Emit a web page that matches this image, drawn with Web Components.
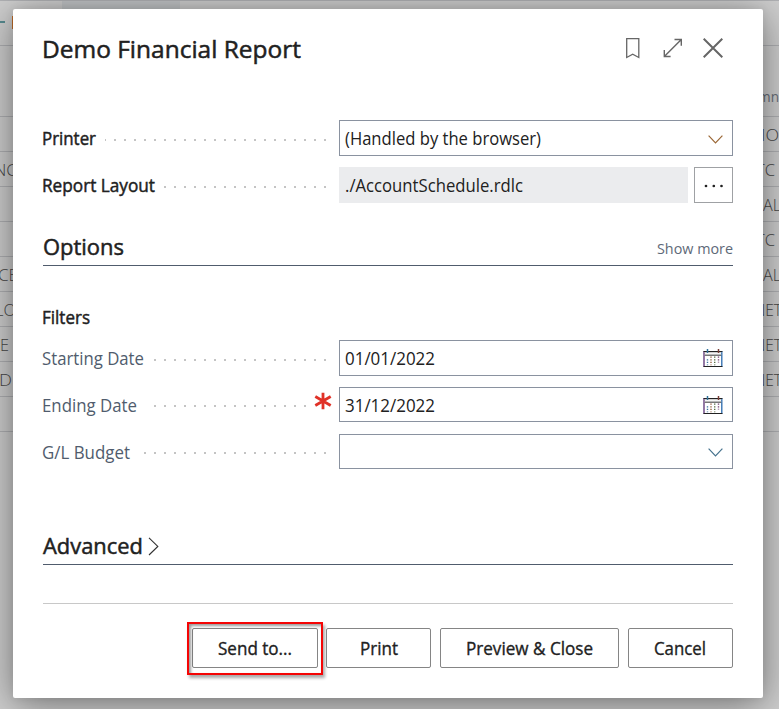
<!DOCTYPE html>
<html lang="en">
<head>
<meta charset="utf-8">
<title>Demo Financial Report</title>
<style>
html,body{margin:0;height:100%;overflow:hidden}
body{font-family:"Open Sans","Noto Sans",sans-serif;font-size:17.3px;color:#212121;background:#cfcfcf}
</style>
</head>
<body>
<report-page></report-page>
<script>
const define=(name,html,setup)=>{
  const t=document.createElement('template');t.innerHTML=html;
  customElements.define(name,class extends HTMLElement{
    constructor(){super();this.attachShadow({mode:'open'}).append(t.content.cloneNode(true));}
    connectedCallback(){if(setup)setup(this,this.shadowRoot);}
  });
};

/* Single-line text condensed or widened to a given measure. */
customElements.define('fit-text',class extends HTMLElement{
  constructor(){
    super();
    this.attachShadow({mode:'open'}).innerHTML='<style>:host{display:inline-block;white-space:nowrap;flex:none}span{display:inline-block;transform-origin:0 50%;-webkit-text-stroke:var(--stroke,0) currentColor}</style><span></span>';
  }
  connectedCallback(){
    const s=this.shadowRoot.querySelector('span');
    const text=this.getAttribute('text'),w=+this.getAttribute('w');
    s.style.transform='none';
    s.textContent=text;
    const natural=s.getBoundingClientRect().width;
    if(w&&natural){
      s.style.transform=`scaleX(${(w/natural).toFixed(4)})`;
      this.style.width=w+'px';
    }
  }
});

define('ui-icon',`<style>:host{display:block;flex:none}svg{display:block;fill:none;stroke:currentColor}</style>`,(el,r)=>{
  const icons={
    bookmark:'<svg width="14" height="21"><path d="M.7.5h12.1v19l-6.1-3.3-6 3.3z" stroke-width="1.3"/></svg>',
    expand:'<svg width="20" height="20"><path d="M1.3 18.5 18.3 1.5M11.5 1.5h6.8v6.3M1.3 12v6.5h6.3" stroke-width="1.4"/></svg>',
    close:'<svg width="20" height="20"><path d="m.7.7 18.6 18.6M19.3.7.7 19.3" stroke-width="2"/></svg>',
    down:'<svg width="15" height="9"><path d="m.6.7 6.9 7.2L14.4.7" stroke-width="1.2"/></svg>',
    right:'<svg width="11" height="19"><path d="m1 .8 8.8 8.6L1 18" stroke-width="1.15"/></svg>',
    dots:'<svg width="20" height="4"><g fill="#212121" stroke="none"><circle cx="2" cy="2" r="1.35"/><circle cx="9.8" cy="2" r="1.35"/><circle cx="17.5" cy="2" r="1.35"/></g></svg>',
    star:'<svg width="18" height="18"><path d="M9 .7v16.6M1.3 4.5l15.4 9M16.7 4.5l-15.4 9" stroke-width="2.8"/></svg>',
    calendar:'<svg width="20" height="19"><path d="M1 2v16" stroke="#5a3075" stroke-width="1.3"/><path d="M18.8 2v16" stroke="#2869ad" stroke-width="1.3"/><path d="M.6 17.5h18.8M.6 2.5h18.8" stroke="#222" stroke-width="1.1"/><path d="M1.8 3.6h16.4M1.8 5.4h16.4" stroke="#ccc"/><path d="M1.8 6.3h16.4" stroke="#555"/><path d="M4.5 0v4" stroke="#31719b" stroke-width="1.5"/><path d="M15.5 0v4" stroke="#783c35" stroke-width="1.5"/><g stroke-dasharray="1.2 1.4" stroke-width="1.4"><path d="M4.5 10.2v6" stroke="#39719c"/><path d="M8 7.6v8.6" stroke="#986241"/><path d="M11.7 7.6v8.6" stroke="#597047"/><path d="M15.5 7.6v6" stroke="#733e6e"/></g></svg>'
  };
  r.innerHTML+=icons[el.getAttribute('name')];
});

define('backdrop-table',`<style>
:host{display:grid;grid-template-rows:45px 71px repeat(9,35px) 1fr;height:709px;color:#484848;font-size:17px;font-weight:300;box-sizing:border-box}
.r{display:flex;justify-content:space-between;align-items:center;border-top:1px solid #b0b1b4;box-sizing:border-box;overflow:hidden}
.r:first-child{border:0;position:relative;align-items:flex-start}
.tab{margin-left:62px;width:118px;height:45px;background:#c2c5c7}
.dash{position:absolute;left:0;top:21px;width:5px;height:2px;background:#588c91}
.bar{position:absolute;left:12px;top:16px;width:3px;height:13px;background:#c06b28}
.head .b{font-size:14px;font-weight:400;color:#69707a;margin-top:31px}
</style>`,(el,r)=>{
  let h='<div class="r"><div class="tab"></div><i class="dash"></i><i class="bar"></i></div><div class="r head"><span></span><fit-text class="b" text="mn" w="21"></fit-text></div>';
  /* left text, its offset and width; right text, its width and right inset */
  const rows=[['',0,0,'MO',29,0],['NC',-6,23,'TC',19,4],['',0,0,'AL',18,-2],['',0,0,'TC',19,4],['CE',-2,20,'AL',18,-2],['LO',-5,21,'NET',28,-3],['E',0,9,'NET',28,-3],['D',-1,13,'NET',28,-3]];
  rows.forEach(([a,x,w,b,v,m])=>h+=`<div class="r">${a?`<fit-text text="${a}" w="${w}" style="margin-left:${x}px"></fit-text>`:'<span></span>'}<fit-text text="${b}" w="${v}" style="margin-right:${m}px"></fit-text></div>`);
  r.innerHTML+=h+'<div class="r"></div><div class="r"></div>';
});

define('field-row',`<style>
:host{display:grid;grid-template-columns:284px 12px 1fr;grid-template-rows:100%;height:36px;align-items:center;color:#505c6d}
:host([strong]){color:#212121}
.l{display:flex;align-items:center;min-width:0;height:100%;font-weight:400}
.l fit-text{margin:1px 1px 0 -1px}
:host([strong]) .l{--stroke:.45px}
.d{flex:1;margin-left:8px;height:2px;margin-top:3px;background:radial-gradient(circle at 8px 1px,#c4c4c4 .8px,#d2d2d2 1.1px,transparent 1.4px) right top/10px 2px repeat-x}
.s{display:none;margin:-8px -5px 0 -12px;color:#e03127;width:18px;z-index:1}
:host([required]) .s{display:block}
:host([required]) .d{margin-right:19px}
.c{display:flex;gap:6px;height:100%}
</style><div class="l"><fit-text></fit-text><span class="d"></span><ui-icon class="s" name="star"></ui-icon></div><span></span><div class="c"><slot></slot></div>`,(el,r)=>{
  const t=r.querySelector('fit-text');
  t.setAttribute('text',el.getAttribute('label'));t.setAttribute('w',el.getAttribute('w'));t.connectedCallback();
  if(el.hasAttribute('gap'))r.querySelector('.d').style.marginLeft=el.getAttribute('gap')+'px';
});

define('input-box',`<style>
:host{display:flex;flex:1;align-items:center;justify-content:space-between;box-sizing:border-box;border:1px solid #8a92a0;padding:0 9px 0 5px;color:#212121;font-weight:400}
:host([readonly]){background:#ebecee;border-color:#ebecee}
:host([button]){flex:0 0 39px;justify-content:center;padding:0;border-color:#9fa1a4}
::slotted(fit-text){margin-top:1px}
</style><slot></slot>`);

define('section-head',`<style>
:host{display:flex;align-items:center;justify-content:space-between;height:40px;border-bottom:1px solid #505c6d;box-sizing:border-box;font-size:22px;--stroke:.5px}
div{display:flex;align-items:center;gap:6px}
::slotted([slot=end]){font-size:15.3px;--stroke:0;color:#5e6978;margin-top:4px}
</style><div><slot></slot></div><slot name="end"></slot>`);

define('push-button',`<style>
:host{display:flex;align-items:center;justify-content:center;box-sizing:border-box;height:40px;border:1px solid #858585;border-radius:2px;background:#fff;--stroke:.35px;position:relative}
:host([marked])::after{content:"";position:absolute;inset:-7px -6px -8px -6px;border:2px solid #f50505;box-shadow:2px 3px 3px #0005,inset 2px 2px 3px #0006}
::slotted(fit-text){margin-top:1px}
</style><slot></slot>`);

define('report-page',`<style>
:host{display:block;position:relative;width:779px;height:709px;overflow:hidden}
.dialog{position:absolute;left:13px;top:9px;width:750px;height:689px;box-sizing:border-box;padding:0 30px;background:#fff;border-radius:2px;box-shadow:0 6px 40px #0007,0 0 10px #0001;display:flex;flex-direction:column}
header{height:80px;display:flex;align-items:center;justify-content:space-between;font-size:24px;--stroke:.5px}
.tools{display:flex;align-items:center;color:#666;padding-right:10px;margin-top:-2px;gap:24px}
.top{display:grid;gap:11px;margin-top:31px}
.options{margin-top:23px}
.filters{margin:38px 0 8px;height:28px;line-height:28px;--stroke:.45px}
.group{display:grid;gap:11px}
.group field-row{height:36px}.group field-row+field-row{height:35px}.group field-row:last-child{margin-top:1px}
.advanced{margin-top:56px}
footer{margin-top:38px;border-top:1px solid #c8c8c8;padding-top:24px;display:flex;justify-content:flex-end;gap:9px}
</style>
<backdrop-table></backdrop-table>
<div class="dialog">
<header><fit-text text="Demo Financial Report" w="259" style="margin:-1px 0 0 -1px"></fit-text><div class="tools"><ui-icon name="bookmark" style="margin-right:-1px"></ui-icon><ui-icon name="expand"></ui-icon><ui-icon name="close" style="margin-left:-4px"></ui-icon></div></header>
<div class="top">
<field-row label="Printer" w="54" strong><input-box><fit-text text="(Handled by the browser)" w="196"></fit-text><ui-icon name="down" style="color:#9b6735;margin-top:2px"></ui-icon></input-box></field-row>
<field-row label="Report Layout" w="113" strong><input-box readonly><fit-text text="./AccountSchedule.rdlc" w="178"></fit-text></input-box><input-box button><ui-icon name="dots" style="margin-top:2px"></ui-icon></input-box></field-row>
</div>
<section-head class="options"><fit-text text="Options" w="81"></fit-text><fit-text slot="end" text="Show more" w="76"></fit-text></section-head>
<div class="filters"><fit-text text="Filters" w="48" style="margin-left:-1px"></fit-text></div>
<div class="group">
<field-row label="Starting Date" w="102" gap="8"><input-box><fit-text text="01/01/2022" w="90"></fit-text><ui-icon name="calendar"></ui-icon></input-box></field-row>
<field-row label="Ending Date" w="95" gap="15" required><input-box><fit-text text="31/12/2022" w="90" style="margin-top:2px"></fit-text><ui-icon name="calendar" style="margin-top:1px"></ui-icon></input-box></field-row>
<field-row label="G/L Budget" w="88" gap="10"><input-box><span></span><ui-icon name="down" style="color:#45728d;margin-top:2px"></ui-icon></input-box></field-row>
</div>
<section-head class="advanced"><fit-text text="Advanced" w="100"></fit-text><ui-icon name="right" style="color:#333;margin-top:3px;margin-left:-1px"></ui-icon></section-head>
<footer>
<push-button marked style="width:126px;margin-right:-1px"><fit-text text="Send to..." w="74"></fit-text></push-button>
<push-button style="width:105px"><fit-text text="Print" w="38"></fit-text></push-button>
<push-button style="width:179px"><fit-text text="Preview &amp; Close" w="127"></fit-text></push-button>
<push-button style="width:105px"><fit-text text="Cancel" w="52" style="margin-left:-2px"></fit-text></push-button>
</footer>
</div>`);
</script>
</body>
</html>
